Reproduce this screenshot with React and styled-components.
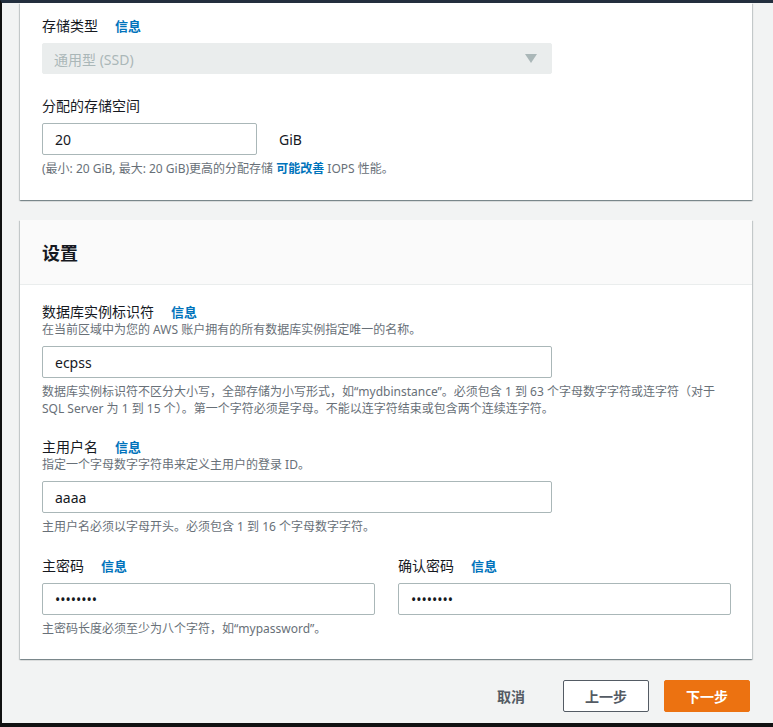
import React from "react";
import styled, { createGlobalStyle } from "styled-components";

const GlobalStyle = createGlobalStyle`
  html, body {
    margin: 0;
    padding: 0;
    background: #111;
  }
  * {
    box-sizing: border-box;
  }
`;

const Frame = styled.div`
  height: 727px;
  overflow: hidden;
  background: #f2f3f3;
  border-top: 3px solid #232f3e;
  border-left: 2px solid #111;
  border-bottom: 4px solid #111;
  padding: 0 21px 0 18px;
  font-family: "Noto Sans", "Noto Sans CJK SC", sans-serif;
  color: #16191f;
  font-size: 14px;
`;

const Card = styled.section`
  background: #fff;
  box-shadow: 0 1px 1px 0 rgba(0, 28, 36, 0.3),
    1px 1px 1px 0 rgba(0, 28, 36, 0.15), -1px 1px 1px 0 rgba(0, 28, 36, 0.15);
  margin-bottom: ${(p) => (p.$clipped ? "20px" : "0")};
`;

const CardHeader = styled.header`
  background: #fafafa;
  border-bottom: 1px solid #eaeded;
  height: 65px;
  padding: 0 22px;
  display: flex;
  align-items: center;
`;

const CardTitle = styled.h2`
  margin: 0;
  font-size: 18px;
  font-weight: 700;
  color: #16191f;
`;

const CardBody = styled.div`
  padding: ${(p) => p.$pad || "17px 21px 22px 22px"};
  display: flex;
  flex-direction: column;
  gap: ${(p) => p.$gap || "20px"};
`;

const Field = styled.div`
  display: flex;
  flex-direction: column;
`;

const LabelRow = styled.div`
  display: flex;
  align-items: center;
  gap: 17px;
  line-height: 20px;
  margin-bottom: ${(p) => (p.$withDesc ? "0" : "7px")};
`;

const Label = styled.label`
  font-size: 14px;
  color: #16191f;
`;

const InfoLink = styled.a`
  font-size: 13px;
  font-weight: 700;
  color: #0073bb;
  text-decoration: none;
`;

const Desc = styled.div`
  font-size: 12px;
  line-height: 16px;
  color: #687078;
  margin-bottom: 8px;
`;

const Hint = styled.div`
  font-size: 12px;
  line-height: 17px;
  color: #687078;
  margin-top: 5px;
`;

const HintLink = styled.a`
  color: #0073bb;
  font-weight: 700;
  text-decoration: none;
`;

const Input = styled.input`
  width: ${(p) => p.$width || "510px"};
  height: 32px;
  border: 1px solid #aab7b8;
  border-radius: 2px;
  padding: 0 12px;
  font-family: inherit;
  font-size: 14px;
  color: #16191f;
  background: #fff;
  outline: none;
`;

const InlineRow = styled.div`
  display: flex;
  align-items: center;
  gap: 22px;
`;

const Unit = styled.span`
  font-size: 14px;
  color: #16191f;
`;

const Select = styled.div`
  width: 510px;
  height: 31px;
  background: #eaeded;
  border: 1px solid #eaeded;
  border-radius: 2px;
  padding: 0 14px 0 11px;
  display: flex;
  align-items: center;
  justify-content: space-between;
  color: #aab7b8;
  font-size: 14px;
`;

const Caret = styled.svg`
  width: 12px;
  height: 9px;
`;

const Columns = styled.div`
  display: grid;
  grid-template-columns: 1fr 1fr;
  column-gap: 23px;
  margin-top: 1px;
`;

const Footer = styled.div`
  display: flex;
  justify-content: flex-end;
  align-items: center;
  padding: 21px 2px 0 0;
  gap: 15px;
`;

const Button = styled.button`
  height: 32px;
  min-width: ${(p) => (p.$variant === "link" ? "0" : "86px")};
  padding: 0 20px;
  margin-right: ${(p) => (p.$variant === "link" ? "2px" : "0")};
  border-radius: 2px;
  font-family: inherit;
  font-size: 14px;
  font-weight: 700;
  cursor: pointer;
  border: 1px solid
    ${(p) =>
      p.$variant === "primary"
        ? "#ec7211"
        : p.$variant === "link"
        ? "transparent"
        : "#545b64"};
  background: ${(p) =>
    p.$variant === "primary"
      ? "#ec7211"
      : p.$variant === "link"
      ? "transparent"
      : "#fff"};
  color: ${(p) => (p.$variant === "primary" ? "#fff" : "#545b64")};
`;

function FieldHead({ label, desc, info = true }) {
  return (
    <>
      <LabelRow $withDesc={!!desc}>
        <Label>{label}</Label>
        {info && <InfoLink href="#">信息</InfoLink>}
      </LabelRow>
      {desc && <Desc>{desc}</Desc>}
    </>
  );
}

export default function App() {
  return (
    <>
      <GlobalStyle />
      <Frame>
        <Card $clipped>
          <CardBody $pad="13px 21px 23px 22px" $gap="22px">
            <Field>
              <FieldHead label="存储类型" />
              <Select>
                <span>通用型 (SSD)</span>
                <Caret viewBox="0 0 12 9">
                  <path d="M0 0h12L6 9z" fill="#aab7b8" />
                </Caret>
              </Select>
            </Field>
            <Field>
              <FieldHead label="分配的存储空间" info={false} />
              <InlineRow>
                <Input $width="215px" defaultValue="20" />
                <Unit>GiB</Unit>
              </InlineRow>
              <Hint>
                (最小: 20 GiB, 最大: 20 GiB)更高的分配存储{" "}
                <HintLink href="#">可能改善</HintLink> IOPS 性能。
              </Hint>
            </Field>
          </CardBody>
        </Card>

        <Card>
          <CardHeader>
            <CardTitle>设置</CardTitle>
          </CardHeader>
          <CardBody>
            <Field>
              <FieldHead
                label="数据库实例标识符"
                desc="在当前区域中为您的 AWS 账户拥有的所有数据库实例指定唯一的名称。"
              />
              <Input defaultValue="ecpss" />
              <Hint>
                数据库实例标识符不区分大小写，全部存储为小写形式，如“mydbinstance”。必须包含
                1 到 63 个字母数字字符或连字符（对于 SQL Server 为 1 到 15
                个）。第一个字符必须是字母。不能以连字符结束或包含两个连续连字符。
              </Hint>
            </Field>
            <Field>
              <FieldHead
                label="主用户名"
                desc="指定一个字母数字字符串来定义主用户的登录 ID。"
              />
              <Input defaultValue="aaaa" />
              <Hint>主用户名必须以字母开头。必须包含 1 到 16 个字母数字字符。</Hint>
            </Field>
            <Columns>
              <Field>
                <FieldHead label="主密码" />
                <Input type="password" $width="100%" defaultValue="password" />
                <Hint>主密码长度必须至少为八个字符，如“mypassword”。</Hint>
              </Field>
              <Field>
                <FieldHead label="确认密码" />
                <Input type="password" $width="100%" defaultValue="password" />
              </Field>
            </Columns>
          </CardBody>
        </Card>

        <Footer>
          <Button $variant="link">取消</Button>
          <Button>上一步</Button>
          <Button $variant="primary">下一步</Button>
        </Footer>
      </Frame>
    </>
  );
}
